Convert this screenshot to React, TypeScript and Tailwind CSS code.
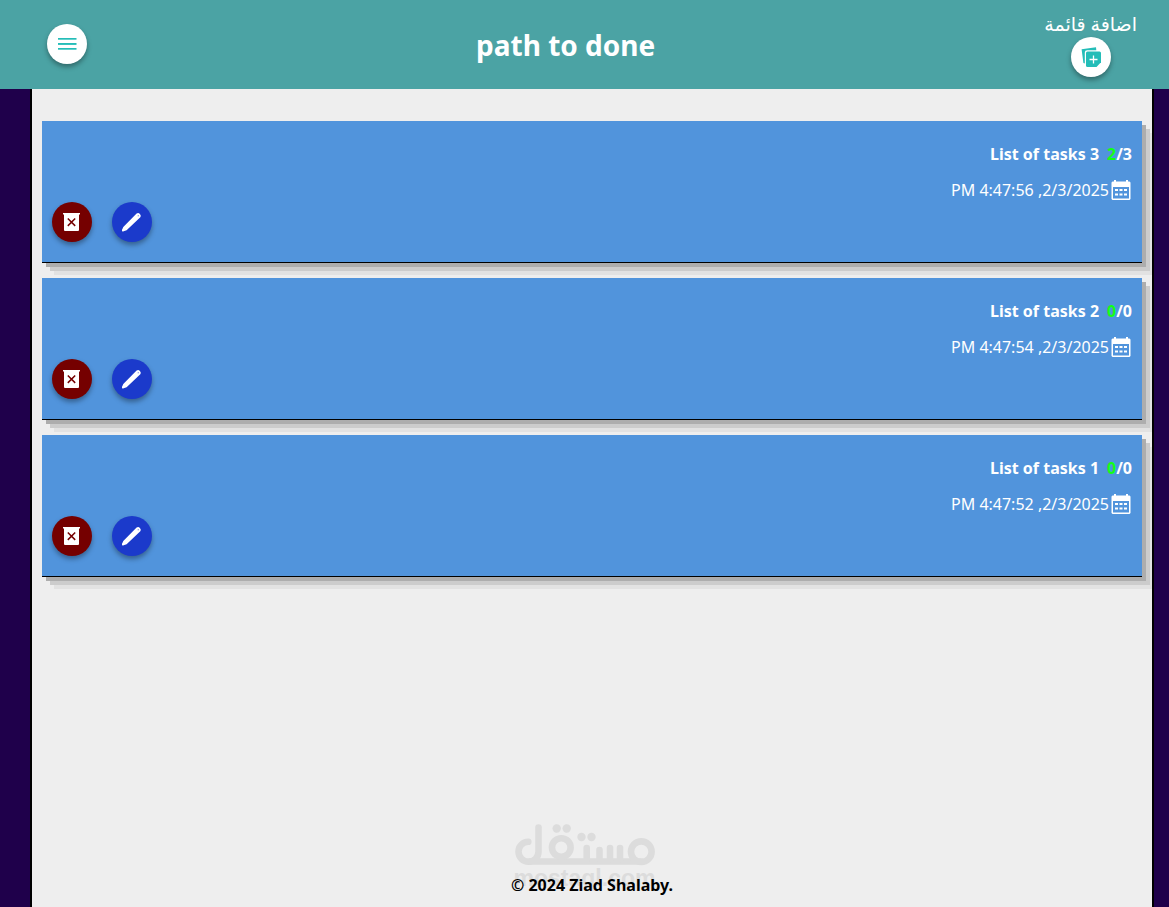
import React from "react";

type TaskList = { id: number; title: string; done: number; total: number; date: string };

const lists: TaskList[] = [
  { id: 3, title: "List of tasks 3", done: 2, total: 3, date: "2/3/2025, 4:47:56 PM" },
  { id: 2, title: "List of tasks 2", done: 0, total: 0, date: "2/3/2025, 4:47:54 PM" },
  { id: 1, title: "List of tasks 1", done: 0, total: 0, date: "2/3/2025, 4:47:52 PM" },
];

const round =
  "flex size-10 shrink-0 items-center justify-center rounded-full shadow-[0_3px_5px_rgba(0,0,0,0.35)]";

function MenuIcon() {
  return (
    <svg width="20" height="14" viewBox="0 0 20 14" fill="#24bdb8" aria-hidden="true">
      <rect x="1" y="1" width="18.5" height="1.7" />
      <rect x="1" y="6" width="18.5" height="1.9" />
      <rect x="1" y="11" width="18.5" height="1.7" />
    </svg>
  );
}

function AddListIcon() {
  return (
    <svg width="24" height="24" viewBox="0 0 24 24" aria-hidden="true">
      <path d="M2.6 4.2 17 2.2 17.300 5.200H8.200a2.400 2.400 0 0 0-2.400 2.400V18.400L4.400 18Z" fill="#24bdb8" />
      <path d="M8.500 6.500H20.500a1.500 1.500 0 0 1 1.500 1.500v9.200L17.500 22H8.500A1.500 1.500 0 0 1 7 20.500V8a1.500 1.500 0 0 1 1.500-1.500Z" fill="#24bdb8" />
      <path d="M14.500 10.500v8M10.500 14.500h8" stroke="#fff" strokeWidth="1.300" />
    </svg>
  );
}

function TrashIcon() {
  return (
    <svg width="18" height="20" viewBox="0 0 18 20" aria-hidden="true">
      <path d="M0 1h17v1.600h-1V18a1 1 0 0 1-1 1H2a1 1 0 0 1-1-1V2.600H0Z" fill="#fff" />
      <path d="m4.800 6.500 7.400 7.400m0-7.400-7.400 7.400" stroke="#750000" strokeWidth="1.500" />
    </svg>
  );
}

function PencilIcon() {
  return (
    <svg width="20" height="20" viewBox="0 0 20 20" aria-hidden="true">
      <path
        d="M.300 17.300 1.300 15 14.600 1.500a2.700 2.700 0 0 1 3.700 3.700L4.600 18.300 1.600 19.300A1.200 1.200 0 0 1 .300 17.300Z"
        fill="#fff"
      />
      <circle cx="16.200" cy="3.800" r="0.500" fill="#1b3acb" />
    </svg>
  );
}

function CalendarIcon() {
  return (
    <svg width="20" height="20" viewBox="0 0 20 20" className="mr-px ml-0.5" aria-hidden="true">
      <path
        fill="#fff"
        fillRule="evenodd"
        d="M3 0h2v1.500h10V0h2v1.500h1.500L19.500 2.500V19l-1 1h-17l-1-1V2.500l1-1H3ZM2 7v11.500h16V7Z"
      />
      <path
        fill="#fff"
        d="M4 9h3v2H4zM8.500 9h3v2h-3zM13 9h3v2h-3zM4 13.500h3v2H4zM8.500 13.500h3v2h-3zM13 13.500h3v2h-3z"
      />
    </svg>
  );
}

function Card({ list }: { list: TaskList }) {
  return (
    <li className="flex flex-col border-b border-black bg-[#5194dc] px-2.5 py-5 text-white shadow-[4px_4px_0_#adadad,8px_8px_0_#cccccc,12px_12px_0_#e2e2e2]">
      <h2 className="flex gap-2 text-base leading-[26px] font-bold">
        <span dir="ltr">
          <span className="text-[#14ff14]">{list.done}</span>/{list.total}
        </span>
        <span dir="ltr">{list.title}</span>
      </h2>
      <p className="mt-[11px] flex h-6 items-center text-base leading-6">
        <CalendarIcon />
        <span>{list.date}</span>
      </p>
      <div className="flex flex-row-reverse gap-5 self-end">
        <button type="button" aria-label="Delete" className={`${round} bg-[#750000]`}>
          <TrashIcon />
        </button>
        <button type="button" aria-label="Edit" className={`${round} bg-[#1b3acb]`}>
          <PencilIcon />
        </button>
      </div>
    </li>
  );
}

function Watermark() {
  return (
    <div
      dir="ltr"
      className="pointer-events-none absolute bottom-[17px] left-1/2 flex -translate-x-1/2 flex-col items-center text-[#dcdcdc]"
    >
      <svg width="152" height="46" viewBox="0 0 152 46" fill="none" stroke="currentColor" aria-hidden="true">
        <g strokeWidth="6.600" strokeLinecap="round" strokeLinejoin="round">
          <path d="M29.500 7.500V31.700A10 10 0 1 1 19.300 21.700" />
          <path d="M21 41.500H132" />
          <circle cx="52.300" cy="27.500" r="9.300" />
          <path d="M77.700 28V39M90.500 30V39M101 28V39M111 28V39" />
          <circle cx="132.300" cy="31.700" r="10.300" />
        </g>
        <g fill="currentColor" stroke="none">
          <circle cx="47.700" cy="8.500" r="4.200" />
          <circle cx="57.700" cy="8.500" r="4.200" />
          <circle cx="72.500" cy="17" r="4.200" />
          <circle cx="82.500" cy="17" r="4.200" />
        </g>
      </svg>
      <span className="font-['Liberation_Sans',sans-serif] text-[23px] leading-6 font-bold">mostaql.com</span>
    </div>
  );
}

export default function App() {
  return (
    <div
      dir="rtl"
      className="relative flex min-h-screen flex-col bg-[#1f004b] font-['Noto_Sans','DejaVu_Sans',sans-serif]"
    >
      <header className="flex h-[89px] items-start justify-between bg-[#4ba3a4] pr-8 pl-[47px] text-white">
        <div className="flex flex-col items-center pt-3">
          <label htmlFor="add-list" className="text-[19px] leading-[25px]">اضافة قائمة</label>
          <button id="add-list" type="button" className={`${round} bg-white`}>
            <AddListIcon />
          </button>
        </div>
        <h1 className="self-center text-[28px] leading-9 font-bold">path to done</h1>
        <button type="button" aria-label="Menu" className={`${round} mt-6 bg-white`}>
          <MenuIcon />
        </button>
      </header>
      <main className="mr-[15px] ml-[30px] flex grow flex-col overflow-hidden border-x-2 border-black bg-[#eeeeee] px-2.5 pt-8">
        <ul className="flex flex-col gap-[15px]">
          {lists.map((l) => (
            <Card key={l.id} list={l} />
          ))}
        </ul>
        <footer dir="ltr" className="relative z-10 mt-auto pb-2.5 text-center text-base leading-6 font-bold">
          © 2024 Ziad Shalaby.
        </footer>
      </main>
      <Watermark />
    </div>
  );
}
